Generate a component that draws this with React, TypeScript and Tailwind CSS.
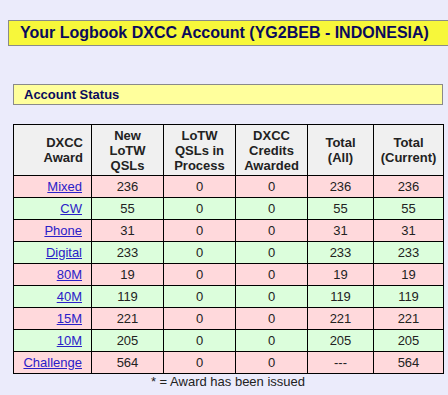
import React from "react";

interface AwardRow {
  name: string;
  newQsls: string;
  inProcess: string;
  awarded: string;
  totalAll: string;
  totalCurrent: string;
}

const rows: AwardRow[] = [
  { name: "Mixed", newQsls: "236", inProcess: "0", awarded: "0", totalAll: "236", totalCurrent: "236" },
  { name: "CW", newQsls: "55", inProcess: "0", awarded: "0", totalAll: "55", totalCurrent: "55" },
  { name: "Phone", newQsls: "31", inProcess: "0", awarded: "0", totalAll: "31", totalCurrent: "31" },
  { name: "Digital", newQsls: "233", inProcess: "0", awarded: "0", totalAll: "233", totalCurrent: "233" },
  { name: "80M", newQsls: "19", inProcess: "0", awarded: "0", totalAll: "19", totalCurrent: "19" },
  { name: "40M", newQsls: "119", inProcess: "0", awarded: "0", totalAll: "119", totalCurrent: "119" },
  { name: "15M", newQsls: "221", inProcess: "0", awarded: "0", totalAll: "221", totalCurrent: "221" },
  { name: "10M", newQsls: "205", inProcess: "0", awarded: "0", totalAll: "205", totalCurrent: "205" },
  { name: "Challenge", newQsls: "564", inProcess: "0", awarded: "0", totalAll: "---", totalCurrent: "564" },
];

const cell = "border border-black text-center p-0";

const App = () => {
  return (
    <div
      className="w-[448px] h-[395px] overflow-hidden bg-[#ebebfb] pt-[20px] text-[13px] text-[#222]"
      style={{ fontFamily: '"Liberation Sans", Arial, sans-serif' }}
    >
      {/* Page title */}
      <div className="ml-[8px] w-[460px] h-[26px] border border-[#8a8a8a] bg-[#f7f73a] pl-[11px] flex items-center">
        <h1 className="font-bold text-[16px] text-[#0a0a5c] whitespace-nowrap">
          Your Logbook DXCC Account (YG2BEB - INDONESIA)
        </h1>
      </div>

      {/* Section header */}
      <div className="mt-[38px] ml-[13px] w-[430px] h-[21px] border border-[#8a8a8a] bg-[#ffff9c] pl-[10px] flex items-center">
        <h2 className="font-bold text-[13px] text-[#0a0a5c]">Account Status</h2>
      </div>

      {/* Award table */}
      <table className="mt-[19px] ml-[13px] w-[430px] border-collapse border border-black table-fixed">
        <colgroup>
          <col className="w-[78px]" />
          <col className="w-[72px]" />
          <col className="w-[72px]" />
          <col className="w-[72px]" />
          <col className="w-[66px]" />
          <col className="w-[70px]" />
        </colgroup>
        <thead>
          <tr className="bg-[#f0f0f0] h-[51px] leading-[15px]">
            <th className="border border-black text-right pr-[8px] font-bold text-[#222]">
              DXCC
              <br />
              Award
            </th>
            <th className={`${cell} font-bold`}>
              New
              <br />
              LoTW
              <br />
              QSLs
            </th>
            <th className={`${cell} font-bold`}>
              LoTW
              <br />
              QSLs in
              <br />
              Process
            </th>
            <th className={`${cell} font-bold`}>
              DXCC
              <br />
              Credits
              <br />
              Awarded
            </th>
            <th className={`${cell} font-bold`}>
              Total
              <br />
              (All)
            </th>
            <th className={`${cell} font-bold`}>
              Total
              <br />
              (Current)
            </th>
          </tr>
        </thead>
        <tbody>
          {rows.map((row, i) => (
            <tr key={row.name} className={`h-[22px] ${i % 2 === 0 ? "bg-[#ffd9dc]" : "bg-[#dcfedc]"}`}>
              <td className="border border-black text-right pr-[9px]">
                <a href="#" className="text-[#2a20c8] underline">
                  {row.name}
                </a>
              </td>
              <td className={cell}>{row.newQsls}</td>
              <td className={cell}>{row.inProcess}</td>
              <td className={cell}>{row.awarded}</td>
              <td className={cell}>{row.totalAll}</td>
              <td className={cell}>{row.totalCurrent}</td>
            </tr>
          ))}
        </tbody>
      </table>
      <p className="ml-[13px] w-[430px] text-center leading-[15px]">* = Award has been issued</p>
    </div>
  );
};

export default App;
